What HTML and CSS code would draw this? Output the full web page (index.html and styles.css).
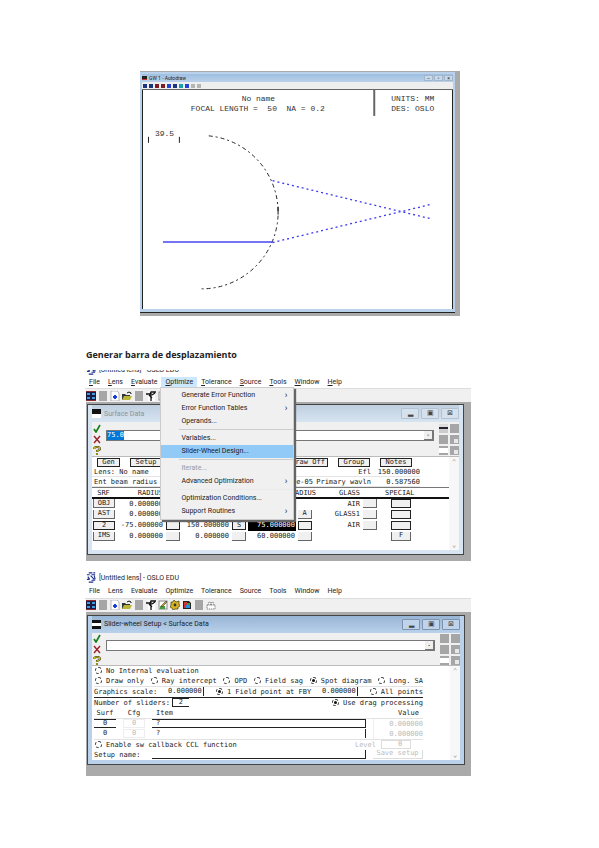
FILE: index.html
```html
<!DOCTYPE html>
<html lang="es">
<head>
    <meta charset="UTF-8">
    <meta name="viewport" content="width=device-width, initial-scale=1.0">
    <title>OSLO EDU</title>
    <link rel="stylesheet" href="styles.css">
</head>
<body>
    <!-- shared icons -->
    <svg class="defs" width="0" height="0">
        <symbol id="i-app" viewBox="0 0 12 12">
            <path d="M3 1h4M8 1h2M1 3h3M6 3h4M2 5l2 3M5 4l4 4M9 4l1 4M1 8h3M6 9h4M3 11h5" stroke="#1b2f8c" stroke-width="1.2" fill="none"/>
        </symbol>
        <symbol id="i-grid" viewBox="0 0 10 10">
            <rect width="10" height="10" fill="#1a1a40"/>
            <path d="M1 2h3v2H1zM6 2h3v2H6zM1 6h3v2H1zM6 6h3v2H6z" fill="#3f9be0"/>
            <path d="M0 0h10v1H0zM0 9h10v1H0z" fill="#8c2a30"/>
        </symbol>
        <symbol id="i-blank" viewBox="0 0 10 10"><rect x="1" width="8" height="10" fill="#a6a6a6"/></symbol>
        <symbol id="i-doc" viewBox="0 0 10 10">
            <path d="M1 0h6l2 2v8H1z" fill="#fff" stroke="#999" stroke-width=".7"/>
            <path d="M4 4h2v1h1v2H6v1H4V7H3V5h1z" fill="#1b3fd0"/>
        </symbol>
        <symbol id="i-open" viewBox="0 0 10 10">
            <path d="M0 3h3l1 1h4v5H0z" fill="#333"/>
            <path d="M2 5h8L8 9H0z" fill="#b9b53a"/>
            <path d="M5 2q2-2 4 0l0 1" stroke="#111" fill="none"/>
        </symbol>
        <symbol id="i-tool" viewBox="0 0 10 10">
            <rect x="2" width="7" height="10" fill="#fff"/>
            <path d="M0 3h4l1-2h5M5 2v8M3 4l3 3M6 4l3-2" stroke="#111" stroke-width="1.3" fill="none"/>
        </symbol>
        <symbol id="i-edit" viewBox="0 0 10 10">
            <rect x="1" y="1" width="8" height="8" fill="#fff" stroke="#888"/>
            <path d="M2 6h5v3H2z" fill="#4c9a4c"/><path d="M3 6l5-5 1 1-5 5z" fill="#c8a020" stroke="#222" stroke-width=".5"/>
        </symbol>
        <symbol id="i-gear" viewBox="0 0 10 10">
            <path d="M1 2l2 0 1-2 2 2 3-1 0 3 1 2-2 1v2l-3 0-2 1-1-2-2-1 1-2z" fill="#d8b520" stroke="#443a10" stroke-width=".7"/>
            <circle cx="5" cy="5" r="1.4" fill="#333"/>
        </symbol>
        <symbol id="i-color" viewBox="0 0 10 10">
            <path d="M1 1h6l2 2v6H1z" fill="#222"/><path d="M2 2h3v6H2z" fill="#d33030"/>
            <path d="M5 3h3v2H5z" fill="#30a040"/><path d="M4 5h4v3H4z" fill="#2090e0"/>
        </symbol>
        <symbol id="i-print" viewBox="0 0 10 10">
            <path d="M1 5h8v4H1zM2 5l1-3h1l1 3M5 5l1-3h1l1 3" fill="#fff" stroke="#666" stroke-width=".8" stroke-dasharray="1.4 .7"/>
        </symbol>
        <symbol id="i-check" viewBox="0 0 8 9"><path d="M1 5l2 3 4-7" stroke="#17801d" stroke-width="1.7" fill="none"/></symbol>
        <symbol id="i-cross" viewBox="0 0 8 9"><path d="M1 1l6 7M7 1L1 8" stroke="#9c1f2b" stroke-width="1.4" fill="none"/></symbol>
        <symbol id="i-help" viewBox="0 0 8 9">
            <path d="M1 3q0-2 3-2t3 2q0 1-3 2v1M4 7v2" stroke="#222" stroke-width="2" fill="none"/>
            <path d="M1 3q0-2 3-2t3 2q0 1-3 2v1M4 7v2" stroke="#e0cf18" stroke-width="1.2" fill="none"/>
        </symbol>
    </svg>

    <main class="page">
        <section class="figure plot">
            <div class="plot-window">
                <div class="plot-title"><span class="plot-icon"></span><span>GW 1 - Autodraw</span>
                    <span class="plot-buttons"><i>–</i><i>▫</i><i>×</i></span>
                </div>
                <div class="plot-tools">
                    <i></i><i></i><i class="red"></i><i class="red"></i><i class="blue"></i><i></i><i class="cyan"></i><i class="blue"></i><i class="off"></i><i class="off"></i>
                </div>
                <svg class="drawing" viewBox="0 0 310 220">
                    <g class="plot-text">
                        <text x="99" y="11">No name</text>
                        <text x="48" y="21">FOCAL LENGTH = &#160;50 &#160;NA = 0.2</text>
                        <text x="249" y="11">UNITS: MM</text>
                        <text x="249" y="21">DES: OSLO</text>
                        <text x="12" y="46">39.5</text>
                    </g>
                    <path d="M232 0v26" stroke="#666" stroke-width="2"/>
                    <path d="M5.5 53v-6M36.5 53v-6" stroke="#222"/>
                    <path d="M66 46A77 77 0 0 1 135.5 122" class="lens"/>
                    <path d="M135.5 117v8" stroke="#111"/>
                    <path d="M135.5 126A77 77 0 0 1 58 199.5" class="lens"/>
                    <path d="M20 152.5H130" stroke="#4747f0" stroke-width="1.3"/>
                    <path d="M130 153L288 115M130 91L288 129" class="ray"/>
                </svg>
            </div>
        </section>

        <h1>Generar barra de desplazamiento</h1>

        <section class="figure app">
            <div class="app-title cut"><svg><use href="#i-app"/></svg><span>[Untitled lens] - OSLO EDU</span></div>
            <nav class="menubar">
                <a href="#"><u>F</u>ile</a><a href="#"><u>L</u>ens</a><a href="#"><u>E</u>valuate</a>
                <div class="menu-open">
                    <a href="#" class="active"><u>O</u>ptimize</a>
                    <div class="popup">
                        <button>Generate Error Function<b>›</b></button>
                        <button>Error Function Tables<b>›</b></button>
                        <button>Operands...</button>
                        <hr>
                        <button>Variables...</button>
                        <button class="selected">Slider-Wheel Design...</button>
                        <hr>
                        <button disabled>Iterate...</button>
                        <button>Advanced Optimization<b>›</b></button>
                        <hr class="faint">
                        <button>Optimization Conditions...</button>
                        <button>Support Routines<b>›</b></button>
                    </div>
                </div>
                <a href="#"><u>T</u>olerance</a><a href="#"><u>S</u>ource</a><a href="#"><u>T</u>ools</a><a href="#"><u>W</u>indow</a><a href="#"><u>H</u>elp</a>
            </nav>
            <div class="toolbar">
                <svg><use href="#i-grid"/></svg><svg><use href="#i-blank"/></svg><svg><use href="#i-doc"/></svg><svg><use href="#i-open"/></svg><svg><use href="#i-blank"/></svg><svg><use href="#i-tool"/></svg><svg><use href="#i-edit"/></svg>
            </div>
            <div class="mdi">
                <div class="child inactive">
                    <div class="child-title"><span class="child-icon"></span><span>Surface Data</span>
                        <span class="win-buttons"><button aria-label="Minimize">▂</button><button aria-label="Maximize">▣</button><button aria-label="Close">⊠</button></span>
                    </div>
                    <div class="entry">
                        <div class="entry-icons"><svg><use href="#i-check"/></svg><svg><use href="#i-cross"/></svg><svg><use href="#i-help"/></svg></div>
                        <div class="combo"><label><mark>75.0</mark><input type="text" aria-label="Value"></label><button aria-label="History">-</button></div>
                        <div class="squares"><i class="pin"></i><i></i><i></i><i class="copy"></i><i class="bar"></i><i class="copy"></i></div>
                    </div>
                    <div class="sheet">
                        <div class="sheet-body">
                            <div class="sheet-buttons">
                                <button>Gen</button><button>Setup</button><button class="draw">Draw Off</button><button>Group</button><button>Notes</button>
                            </div>
                            <div class="info"><span>Lens: No name</span><span></span><span>Efl</span><span>150.000000</span></div>
                            <div class="info"><span>Ent beam radius</span><span>6e-05</span><span>Primary wavln</span><span>0.587560</span></div>
                            <table class="surfaces">
                                <colgroup><col class="c-srf"><col class="c-num"><col class="c-btn"><col class="c-num"><col class="c-btn"><col class="c-num"><col class="c-wide"><col class="c-glass"><col class="c-btn"><col></colgroup>
                                <thead>
                                    <tr><th class="mid">SRF</th><th>RADIUS</th><th colspan="3"></th><th colspan="2">RADIUS</th><th>GLASS</th><th></th><th class="special">SPECIAL</th></tr>
                                </thead>
                                <tbody>
                                    <tr><td><button>OBJ</button></td><td>0.000000</td><td></td><td></td><td></td><td></td><td></td><td>AIR</td><td><button></button></td><td><button class="heavy"></button></td></tr>
                                    <tr><td><button>AST</button></td><td>0.000000</td><td></td><td></td><td></td><td></td><td><button>A</button></td><td>GLASS1</td><td><button></button></td><td><button class="heavy"></button></td></tr>
                                    <tr><td><button class="heavy">2</button></td><td>-75.000000</td><td><button class="heavy"></button></td><td>150.000000</td><td><button class="heavy">S</button></td><td class="current">75.000000</td><td><button class="heavy"></button></td><td>AIR</td><td><button></button></td><td><button class="heavy"></button></td></tr>
                                    <tr><td><button>IMS</button></td><td>0.000000</td><td><button></button></td><td>0.000000</td><td><button></button></td><td>60.000000</td><td><button></button></td><td></td><td></td><td><button>F</button></td></tr>
                                </tbody>
                            </table>
                        </div>
                        <div class="scroll"><span>⌃</span><span>⌄</span></div>
                    </div>
                </div>
            </div>
        </section>

        <section class="figure app second">
            <div class="app-title"><svg><use href="#i-app"/></svg><span>[Untitled lens] - OSLO EDU</span></div>
            <nav class="menubar">
                <a href="#">File</a><a href="#">Lens</a><a href="#">Evaluate</a><a href="#">Optimize</a><a href="#">Tolerance</a><a href="#">Source</a><a href="#">Tools</a><a href="#">Window</a><a href="#">Help</a>
            </nav>
            <div class="toolbar">
                <svg><use href="#i-grid"/></svg><svg><use href="#i-blank"/></svg><svg><use href="#i-doc"/></svg><svg><use href="#i-open"/></svg><svg><use href="#i-blank"/></svg><svg><use href="#i-tool"/></svg><svg><use href="#i-edit"/></svg><svg><use href="#i-gear"/></svg><svg><use href="#i-color"/></svg><svg><use href="#i-blank"/></svg><svg><use href="#i-print"/></svg>
            </div>
            <div class="mdi">
                <div class="child">
                    <div class="child-title"><span class="child-icon lined"></span><span>Slider-wheel Setup &lt; Surface Data</span>
                        <span class="win-buttons"><button aria-label="Minimize">▂</button><button aria-label="Maximize">▣</button><button aria-label="Close">⊠</button></span>
                    </div>
                    <div class="entry">
                        <div class="entry-icons"><svg><use href="#i-check"/></svg><svg><use href="#i-cross"/></svg><svg><use href="#i-help"/></svg></div>
                        <div class="combo"><label><input type="text" aria-label="Value"></label><button aria-label="History">.</button></div>
                        <div class="squares"><i></i><i></i><i></i><i class="copy"></i><i class="bar"></i><i class="copy"></i></div>
                    </div>
                    <div class="sheet">
                        <form class="sheet-body sliders">
                            <div class="row"><label><input type="radio" name="eval">No Internal evaluation</label></div>
                            <div class="row ruled spread">
                                <label><input type="radio" name="eval">Draw only</label>
                                <label><input type="radio" name="eval">Ray intercept</label>
                                <label><input type="radio" name="eval">OPD</label>
                                <label><input type="radio" name="eval">Field sag</label>
                                <label><input type="radio" name="eval" checked>Spot diagram</label>
                                <label><input type="radio" name="eval">Long. SA</label>
                            </div>
                            <div class="row ruled strong spread">
                                <label for="scale">Graphics scale:</label>
                                <input type="text" id="scale" class="number" value="0.000000">
                                <label><input type="radio" name="points" checked>1 Field point at FBY</label>
                                <input type="text" class="number" aria-label="FBY" value="0.000000">
                                <label><input type="radio" name="points">All points</label>
                            </div>
                            <div class="row spread">
                                <span class="count"><label for="count">Number of sliders:</label><input type="text" id="count" value="2"></span>
                                <label><input type="radio" name="drag" checked>Use drag processing</label>
                            </div>
                            <div class="row ruled items"><span>Surf</span><span>Cfg</span><span class="left">Item</span><span class="right">Value</span></div>
                            <div class="row items"><input type="text" aria-label="Surf 1" class="surf on" value="0"><input type="text" aria-label="Cfg 1" class="cfg" value="0"><input type="text" aria-label="Item 1" class="item on" value="?"><span class="value">0.000000</span></div>
                            <div class="row ruled items"><input type="text" aria-label="Surf 2" class="surf" value="0"><input type="text" aria-label="Cfg 2" class="cfg" value="0"><input type="text" aria-label="Item 2" class="item" value="?"><span class="value">0.000000</span></div>
                            <div class="row spread">
                                <label><input type="radio" name="sw">Enable sw callback CCL function</label>
                                <span class="level"><label for="level">Level</label><input type="text" id="level" value="0"></span>
                            </div>
                            <div class="row setup"><label for="setup">Setup name:</label><input type="text" id="setup" class="item name"><button type="button" disabled>Save setup</button></div>
                        </form>
                        <div class="scroll"><span>⌃</span><span>⌄</span></div>
                    </div>
                </div>
            </div>
        </section>
    </main>
</body>
</html>
```
FILE: styles.css
```css
* {
    box-sizing: border-box;
}

body {
    margin: 0;
    background-color: #fff;
    color: #222;
    font-family: Roboto, "Liberation Sans", sans-serif;
    font-size: 7px;
    line-height: 10px;
}

button,
input {
    font: inherit;
    color: inherit;
    margin: 0;
    padding: 0;
    border: none;
    border-radius: 0;
    background: none;
    min-width: 0;
}

a {
    color: inherit;
    text-decoration: none;
}

i,
b {
    font-style: normal;
    font-weight: normal;
}

.defs {
    display: block;
}

.page {
    padding: 71px 128px 72px 86px;
}

h1 {
    margin: 33px 0 9px;
    font-family: "Open Sans", sans-serif;
    font-size: 9px;
    font-weight: 700;
    line-height: 12px;
}

/* lens drawing */
.plot {
    margin: 0 11px 0 54px;
    padding: 1px 5px 4px 0;
    background-color: #aaa;
}

.plot-window {
    border: 2px solid #b9d1ea;
    border-bottom: 3px solid #b9d1ea;
    box-shadow: 0 1px 0 #222;
}

.plot-title {
    display: flex;
    align-items: center;
    gap: 2px;
    height: 8px;
    font-size: 5px;
    line-height: 8px;
    background: linear-gradient(#9ebfe0, #b9d1ea);
}

.plot-icon {
    width: 5px;
    height: 4px;
    background-color: #222;
    border-bottom: 1px solid #c33;
}

.plot-buttons {
    display: flex;
    gap: 1px;
    margin-left: auto;
}

.plot-buttons i {
    width: 9px;
    height: 6px;
    line-height: 4px;
    text-align: center;
    background-color: #c8d9ec;
    border: 1px solid #a3b6cc;
}

.plot-tools {
    display: flex;
    align-items: center;
    gap: 2px;
    height: 8px;
    padding-left: 1px;
    background-color: #eee;
    border-bottom: 1px solid #666;
}

.plot-tools i {
    width: 4px;
    height: 4px;
    background-color: #1c3580;
}

.plot-tools .red {
    background-color: #7c1c24;
}

.plot-tools .blue {
    background-color: #2342d0;
}

.plot-tools .cyan {
    background-color: #1aa0a8;
}

.plot-tools .off {
    background-color: #b5b5b5;
}

.drawing {
    display: block;
    width: 100%;
    background-color: #fff;
    border: solid #222;
    border-width: 0 1px;
}

.plot-text {
    font-family: "Liberation Mono", monospace;
    font-size: 8px;
    fill: #333;
}

.lens {
    fill: none;
    stroke: #222;
    stroke-dasharray: 4 3 2 3;
}

.ray {
    fill: none;
    stroke: #3a3af5;
    stroke-width: 1.3;
    stroke-dasharray: 2 3;
}

/* application windows */
.app-title {
    display: flex;
    align-items: center;
    gap: 2px;
    height: 14px;
    font-size: 7px;
}

.app-title svg {
    width: 11px;
    height: 11px;
}

.app-title.cut {
    height: 5px;
    align-items: flex-end;
    overflow: hidden;
}

.menubar {
    display: flex;
    height: 14px;
    margin-left: -1px;
    align-items: center;
    border-bottom: 1px solid #ddd;
}

.menubar a {
    display: block;
    padding: 0 4px;
}

.menubar .active {
    background-color: #cce8ff;
}

.menu-open {
    position: relative;
}

.popup {
    position: absolute;
    z-index: 2;
    top: 10px;
    left: -1px;
    width: 134px;
    padding: 1px 0;
    background-color: #f0f0f0;
    border: 1px solid #ccc;
    box-shadow: 2px 2px 1px #666;
}

.popup button {
    display: flex;
    justify-content: space-between;
    width: 100%;
    height: 13px;
    padding: 0 6px 0 20px;
    line-height: 13px;
    text-align: left;
}

.popup b {
    font-size: 9px;
}

.popup .selected {
    background-color: #91c9f7;
}

.popup button:disabled {
    color: #999;
}

.popup hr {
    height: 1px;
    margin: 1px 0 2px 18px;
    border: none;
    background-color: #ccc;
}

.popup .faint {
    background-color: #eaeaea;
}

.toolbar {
    display: flex;
    align-items: center;
    gap: 2px;
    height: 14px;
    background-color: #f0f0f0;
    border-bottom: 1px solid #aaa;
}

.toolbar svg {
    width: 10px;
    height: 10px;
}

.mdi {
    padding: 1px 7px 6px 1px;
    background-color: #aaa;
}

.second {
    margin-top: 10px;
}

.second .mdi {
    padding: 2px 6px 11px 1px;
}

.child {
    padding: 0 4px 4px;
    background-color: #b9d1ea;
    border: 1px solid #444;
}

.child.inactive {
    background-color: #d7e4f2;
}

.child-title {
    display: flex;
    align-items: center;
    gap: 3px;
    height: 17px;
    background: linear-gradient(#98b5d6, #b9d1ea);
}

.inactive .child-title {
    background: linear-gradient(#bfcfdf, #d7e4f2);
    color: #8a949e;
}

.child-icon {
    width: 9px;
    height: 9px;
    background: linear-gradient(#111 50%, #fff 50%);
}

.child-icon.lined {
    background: linear-gradient(#111 30%, #fff 30%, #fff 70%, #111 70%);
}

.win-buttons {
    display: flex;
    gap: 2px;
    margin-left: auto;
}

.win-buttons button {
    width: 18px;
    height: 11px;
    color: #444;
    line-height: 9px;
    border: 1px solid #7e93ad;
    border-radius: 1px;
    background-color: #bfd3ea;
}

.inactive .win-buttons button {
    border-color: #b3c1d0;
    background-color: #d5e1ed;
}

.entry {
    display: flex;
    gap: 5px;
    height: 34px;
    padding-top: 2px;
    background-color: #f0f0f0;
}

.second .entry {
    height: 32px;
    padding-top: 1px;
}

.entry-icons {
    display: flex;
    flex-direction: column;
    gap: 2px;
    padding-left: 1px;
}

.entry-icons svg {
    width: 8px;
    height: 9px;
}

.combo {
    display: flex;
    flex: 1;
    height: 11px;
    margin-top: 6px;
    background-color: #fff;
    border: 1px solid #777;
    font-family: "DejaVu Sans Mono", monospace;
}

.combo label {
    display: flex;
    flex: 1;
    line-height: 9px;
}

.combo input {
    flex: 1;
}

.combo mark {
    background-color: #0078d7;
    color: #fff;
}

.combo button {
    width: 9px;
    line-height: 7px;
    background-color: #f0f0f0;
    border-right: 1px solid #777;
    border-bottom: 1px solid #777;
}

.squares {
    display: grid;
    grid-template-columns: 9px 9px;
    grid-auto-rows: 9px;
    gap: 2px;
    align-content: start;
}

.squares i {
    background-color: #a6a6a6;
}

.squares .pin {
    border-top: 3px solid #ddd;
    border-bottom: 4px solid #ccc;
    background-color: #223;
}

.squares .copy {
    border: solid #a6a6a6;
    border-width: 4px 1px 1px 4px;
    background-color: #e8e8e8;
}

.squares .bar {
    border: solid #a6a6a6;
    border-width: 2px 0;
    background-color: #fff;
}

.sheet {
    display: flex;
    background-color: #fff;
    border-top: 1px solid #bbb;
    font-family: "DejaVu Sans Mono", monospace;
    font-size: 7px;
}

.sheet-body {
    flex: 1;
    min-width: 0;
}

.scroll {
    display: flex;
    flex-direction: column;
    justify-content: space-between;
    width: 10px;
    background-color: #f7f7f7;
    color: #999;
    text-align: center;
}

/* surface data */
.inactive .sheet-body {
    padding-bottom: 8px;
}

.sheet-buttons {
    display: flex;
    gap: 10px;
    padding: 1px 37px 0 5px;
}

.sheet-buttons button {
    width: 32px;
    height: 9px;
    line-height: 7px;
    background-color: #f0f0f0;
    border: 1px solid #222;
}

.sheet-buttons button:first-child {
    width: 23px;
}

.sheet-buttons .draw {
    width: 40px;
    margin-left: auto;
}

.info {
    display: grid;
    grid-template-columns: 150px 1fr 58px 49px;
    height: 10px;
    margin-right: 29px;
    padding-left: 2px;
    border-bottom: 1px solid #e5e5e5;
    text-align: right;
}

.info span:first-child {
    text-align: left;
}

.surfaces {
    width: 100%;
    table-layout: fixed;
    border-collapse: collapse;
}

.surfaces th,
.surfaces td {
    height: 11px;
    padding: 0 1px 0 0;
    font-weight: normal;
    line-height: 8px;
    text-align: right;
}

.surfaces th {
    height: 10px;
}

.surfaces thead {
    border-top: 1px solid #777;
    border-bottom: 2px solid #111;
}

.surfaces .mid {
    text-align: center;
}

.surfaces .special {
    padding-left: 6px;
    text-align: left;
}

.c-srf { width: 24px; }
.c-num { width: 48px; }
.c-btn { width: 18px; }
.c-wide { width: 21px; }
.c-glass { width: 44px; }

.surfaces button {
    display: block;
    width: 14px;
    height: 9px;
    margin-left: 2px;
    line-height: 7px;
    background-color: #f0f0f0;
    border: solid #666;
    border-width: 0 1px 1px 0;
}

.surfaces td:first-child button {
    width: 22px;
    margin-left: 1px;
    border-left-width: 1px;
}

.surfaces td:last-child button {
    width: 20px;
    margin-left: 12px;
    border-width: 0 1px 1px;
}

.surfaces .heavy,
.surfaces td:first-child .heavy,
.surfaces td:last-child .heavy {
    border: 1px solid #222;
}

.surfaces .current {
    background-color: #000;
    color: #fff;
}

/* slider-wheel setup */
.sliders {
    padding-left: 2px;
}

.row {
    display: flex;
    height: 10px;
    margin-right: 27px;
}

.ruled {
    height: 11px;
    border-bottom: 1px solid #e2e2e2;
}

.strong {
    border-bottom-color: #222;
}

.spread {
    justify-content: space-between;
}

.row label {
    display: flex;
    align-items: center;
    height: 10px;
}

.row input {
    height: 9px;
}

.row input[type="radio"] {
    appearance: none;
    width: 7px;
    height: 7px;
    margin: 0 4px 0 1px;
    border: 1px dashed #333;
    border-radius: 50%;
}

.row input[type="radio"]:checked {
    background-color: #111;
    background-clip: content-box;
    padding: 1px;
}

.row .number {
    width: 36px;
    border-right: 1px solid #222;
}

.count {
    display: flex;
    gap: 2px;
}

.count input {
    width: 17px;
    border: 1px solid #222;
    border-right: none;
    text-align: center;
}

.items {
    display: grid;
    grid-template-columns: 22px 22px 1fr 50px;
    column-gap: 7px;
    text-align: center;
}

.items .left {
    padding-left: 4px;
    text-align: left;
}

.items .right {
    padding-right: 4px;
    text-align: right;
}

.surf {
    text-align: center;
}

.surf.on {
    border: solid #222;
    border-width: 1px 0;
}

.cfg {
    border: 1px solid #eee;
    color: #bbb;
    text-align: center;
}

.item {
    padding-left: 4px;
    border-right: 1px solid #222;
}

.item.on {
    border: 1px solid #222;
    border-left: none;
}

.value {
    color: #bbb;
    text-align: right;
    border-left: 1px solid #eee;
}

.level {
    display: flex;
    gap: 5px;
    margin-right: 12px;
    color: #bbb;
}

.level input {
    width: 30px;
    padding-left: 8px;
    border: 1px solid #ddd;
    text-align: center;
}

.setup {
    display: grid;
    grid-template-columns: 51px 1fr 50px;
    column-gap: 7px;
}

.name {
    border-bottom: 1px solid #222;
}

.setup button {
    height: 9px;
    line-height: 7px;
    color: #bbb;
    border: solid #ddd;
    border-width: 0 1px 1px 0;
}
```
